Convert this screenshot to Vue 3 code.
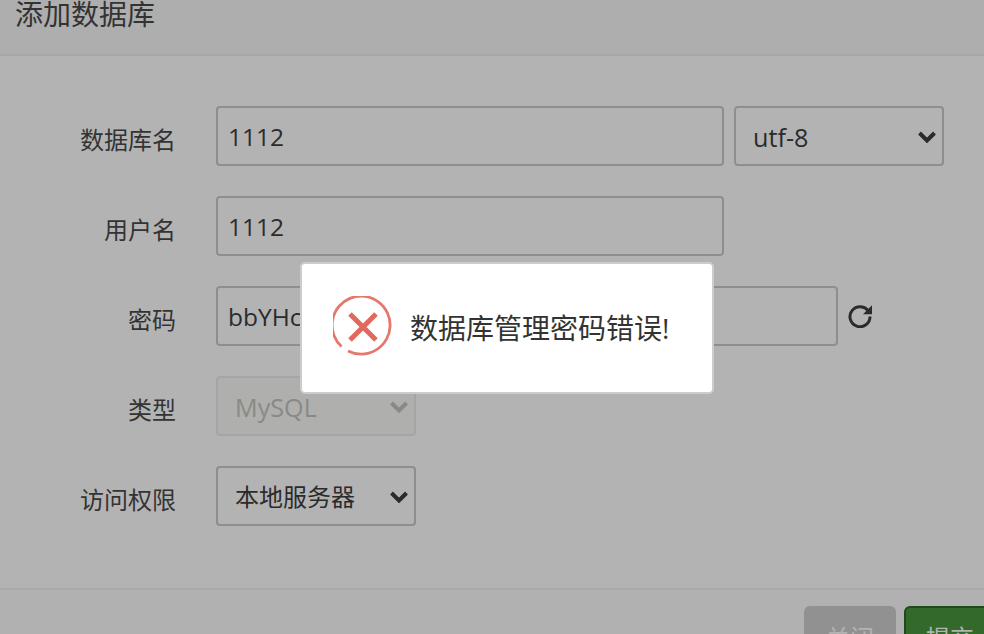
<script setup>
const rows = [
  { label: '数据库名', kind: 'name' },
  { label: '用户名', kind: 'user' },
  { label: '密码', kind: 'pass' },
  { label: '类型', kind: 'type' },
  { label: '访问权限', kind: 'access' }
]
</script>

<template>
  <div class="page">
    <header class="head">添加数据库</header>
    <main class="body">
      <div v-for="row in rows" :key="row.kind" class="row">
        <label class="label">{{ row.label }}</label>
        <template v-if="row.kind === 'name'">
          <div class="field wide">1112</div>
          <div class="field select charset">
            <span class="latin">utf-8</span>
            <svg class="chev" viewBox="0 0 18 12"><path d="M1.5 2 9 9.5 16.5 2" /></svg>
          </div>
        </template>
        <div v-else-if="row.kind === 'user'" class="field wide">1112</div>
        <template v-else-if="row.kind === 'pass'">
          <div class="field pass">bbYHcdP6kLx2</div>
          <svg class="refresh" viewBox="0 0 24 24">
            <path class="arc" d="M20.6 7.6A10 10 0 1 0 22 12.5" />
            <path class="tip" d="M24 1.2V10.2H15Z" />
          </svg>
        </template>
        <div v-else-if="row.kind === 'type'" class="field select small disabled">
          <span class="latin">MySQL</span>
          <svg class="chev" viewBox="0 0 18 12"><path d="M1.5 2 9 9.5 16.5 2" /></svg>
        </div>
        <div v-else class="field select small">
          <span>本地服务器</span>
          <svg class="chev" viewBox="0 0 18 12"><path d="M1.5 2 9 9.5 16.5 2" /></svg>
        </div>
      </div>
    </main>
    <footer class="foot">
      <button class="btn close">关闭</button>
      <button class="btn submit">提交</button>
    </footer>

    <div class="toast">
      <svg class="err" viewBox="0 0 60 60">
        <path class="ring" d="M8.5 50.5A29 29 0 1 1 15 55" />
        <path class="cross" d="M17 18 43 44M43 18 17 44" />
      </svg>
      <span class="msg">数据库管理密码错误!</span>
    </div>
  </div>
</template>

<style scoped>
.page {
  position: relative;
  width: 984px;
  height: 634px;
  overflow: hidden;
  background: #b3b3b3;
  color: #2b2b2b;
  font-family: "Open Sans", "Noto Sans CJK SC", sans-serif;
  font-size: 24px;
}
.head {
  box-sizing: border-box;
  height: 56px;
  padding-left: 15px;
  font-size: 28px;
  line-height: 28px;
  color: #333;
  background: #aeaeae;
  border-bottom: 2px solid #a7a7a7;
}
.body {
  box-sizing: border-box;
  height: 532px;
  padding-top: 50px;
  display: flex;
  flex-direction: column;
  gap: 30px;
}
.row {
  display: flex;
  align-items: center;
  height: 60px;
}
.label {
  width: 176px;
  margin-right: 40px;
  padding-top: 4px;
  text-align: right;
  color: #333;
}
.field {
  box-sizing: border-box;
  height: 60px;
  padding: 2px 11px 0 10px;
  border: 2px solid #8e8e8e;
  border-radius: 4px;
  display: flex;
  align-items: center;
  line-height: 54px;
  color: #2b2b2b;
  font-size: 24.5px;
}
.wide { width: 508px; }
.pass { width: 622px; }
.select {
  justify-content: space-between;
  padding: 2px 6px 0 17px;
  font-size: 24px;
}
.latin { font-size: 25.2px; }
.charset { width: 210px; margin-left: 10px; }
.small { width: 200px; }
.disabled {
  border-color: #a5a5a3;
  color: #8a8a85;
  background: #afafad;
}
.chev {
  width: 18px;
  height: 12px;
  fill: none;
  stroke: currentColor;
  stroke-width: 4;
}
.refresh {
  width: 24px;
  height: 24px;
  margin: 0 0 0 10px;
}
.arc { fill: none; stroke: #2b2b2b; stroke-width: 3; }
.tip { fill: #2b2b2b; }
.foot {
  box-sizing: border-box;
  height: 46px;
  padding-top: 16px;
  margin-right: -12px;
  display: flex;
  justify-content: flex-end;
  gap: 8px;
  background: #b0b1b0;
  border-top: 2px solid #a9aaa9;
}
.btn {
  box-sizing: border-box;
  flex: none;
  width: 92px;
  height: 60px;
  border: 2px solid;
  border-radius: 6px;
  padding: 0;
  font: inherit;
  color: #b3b3b3;
}
.close { background: #919191; border-color: #919191; }
.submit { background: #33692b; border-color: #1f4a1a; }
.toast {
  position: absolute;
  left: 300px;
  top: 262px;
  box-sizing: border-box;
  width: 414px;
  height: 132px;
  background: #fff;
  border: 2px solid #ccc;
  border-radius: 5px;
  display: flex;
  align-items: center;
  padding: 0 0 4px 31px;
  gap: 17px;
}
.err { width: 60px; height: 60px; flex: none; filter: blur(0.4px); }
.ring { fill: none; stroke: #e4786d; stroke-width: 2.8; }
.cross { fill: none; stroke: #e0695d; stroke-width: 5; }
.msg {
  font-size: 28px;
  color: #333;
  white-space: nowrap;
  position: relative;
  top: 1px;
}
</style>
